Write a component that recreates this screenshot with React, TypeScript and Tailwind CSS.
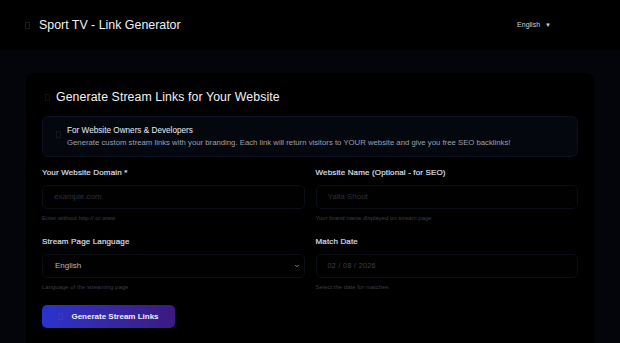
import { ChevronDown } from "lucide-react";

function Tofu({ className = "" }: { className?: string }) {
  return (
    <span
      className={`inline-block h-[7px] w-[5px] border border-white/10 ${className}`}
    />
  );
}

function Field({
  label,
  help,
  children,
}: {
  label: string;
  help: string;
  children: React.ReactNode;
}) {
  return (
    <div className="flex flex-col">
      <label className="text-[8px] leading-[10px] tracking-[0.15px] text-[#dcdfe5] [-webkit-text-stroke:0.2px_#dcdfe5]">
        {label}
      </label>
      <div className="mt-[7px] flex h-[24px] items-center rounded-[5px] border border-[#0c0e16] bg-[#010102] px-[11px]">
        {children}
      </div>
      <p className="mt-[5px] text-[6px] leading-[8px] text-[#3a3e48]">{help}</p>
    </div>
  );
}

export default function App() {
  return (
    <div
      className="h-[343px] w-[620px] overflow-hidden bg-[#04050a] text-white"
      style={{ fontFamily: "'Liberation Sans', Arial, sans-serif" }}
    >
      {/* Header */}
      <header className="flex h-[50px] items-center justify-between bg-black pl-[25px] pr-[69px]">
        <div className="flex items-center gap-[9px]">
          <Tofu />
          <span className="text-[12.4px] leading-[16px] text-[#eef0f4]">
            Sport TV - Link Generator
          </span>
        </div>
        <div className="flex items-center gap-[5px] text-[7px] text-[#cfd2d8]">
          <span>English</span>
          <span className="text-[6px]">▼</span>
        </div>
      </header>

      {/* Card */}
      <main className="px-[26px] pt-[23px]">
        <div className="h-[290px] rounded-tl-[8px] rounded-tr-[8px] bg-black px-[16px] pt-[16px]">
          <h1 className="flex h-[16px] items-center gap-[6px] pl-[3px] text-[12.3px] leading-[16px] tracking-[0.1px] text-[#f1f2f5]">
            <Tofu className="opacity-60" />
            Generate Stream Links for Your Website
          </h1>

          <div className="mt-[11px] flex h-[41px] items-start gap-[6px] rounded-[6px] border border-[#0c1020] bg-[#05070f] pl-[13px] pt-[8px]">
            <Tofu className="mt-[6px] opacity-60" />
            <div>
              <div className="text-[8.2px] leading-[11px] text-[#eceef2]">
                For Website Owners &amp; Developers
              </div>
              <div className="mt-[2px] text-[7.75px] leading-[10px] text-[#9aa0ab]">
                Generate custom stream links with your branding. Each link will return visitors to YOUR website and give you free SEO backlinks!
              </div>
            </div>
          </div>

          <div className="mt-[11px] grid grid-cols-2 gap-x-[11px] gap-y-[15px]">
            <Field label="Your Website Domain *" help="Enter without http:// or www">
              <span className="text-[8px] text-[#2c3038]">example.com</span>
            </Field>
            <Field
              label="Website Name (Optional - for SEO)"
              help="Your brand name displayed on stream page"
            >
              <span className="text-[8px] text-[#2c3038]">Yalla Shoot</span>
            </Field>
            <Field label="Stream Page Language" help="Language of the streaming page">
              <span className="flex-1 pl-[1px] text-[8px] text-[#b4b8c0]">English</span>
              <ChevronDown className="-mr-[7px] h-[6px] w-[6px] text-[#b4b8c0]" strokeWidth={3} />
            </Field>
            <Field label="Match Date" help="Select the date for matches">
              <span className="text-[7px] tracking-[0.4px] text-[#3c4049]">
                02 / 08 / 2026
              </span>
            </Field>
          </div>

          <button className="mt-[14px] flex h-[23px] w-[133px] items-center justify-center gap-[8px] rounded-[5px] bg-gradient-to-r from-[#2a33cc] to-[#3c1a80] text-[8px] font-semibold text-[#eceef6]">
            <Tofu className="opacity-50" />
            Generate Stream Links
          </button>
        </div>
      </main>
    </div>
  );
}
